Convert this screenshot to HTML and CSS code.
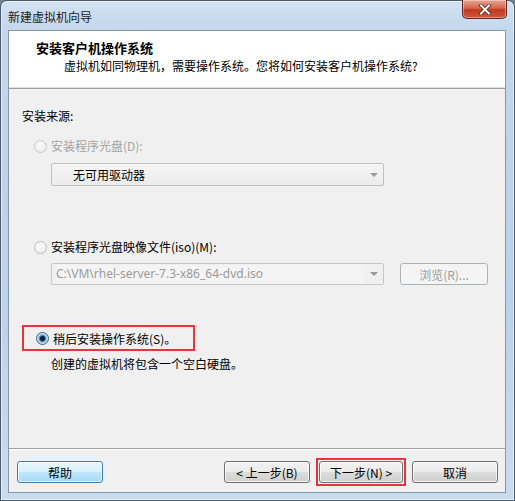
FILE: index.html
```html
<!DOCTYPE html>
<html lang="zh-CN">
<head>
  <meta charset="UTF-8" />
  <title>新建虚拟机向导</title>
  <link rel="stylesheet" href="styles.css">
</head>
<body>

  <div class="window">
    <div class="titlebar">
      <span class="title">新建虚拟机向导</span>
      <button class="close-btn">
        <svg width="14" height="11" viewBox="0 0 14 11">
          <path d="M3 1.5 L11 9.5 M11 1.5 L3 9.5" stroke="#3a1a14" stroke-width="3.4" stroke-linecap="square"/>
          <path d="M3 1.5 L11 9.5 M11 1.5 L3 9.5" stroke="#ffffff" stroke-width="2" stroke-linecap="square"/>
        </svg>
      </button>
    </div>

    <div class="client">
      <div class="header">
        <div class="header-title">安装客户机操作系统</div>
        <div class="header-sub">虚拟机如同物理机，需要操作系统。您将如何安装客户机操作系统?</div>
      </div>

      <div class="content">
        <div class="label">安装来源:</div>

        <div class="radio-row disabled row-cd">
          <span class="radio"></span>
          <span>安装程序光盘(D):</span>
        </div>
        <div class="combo combo-list">
          <span class="combo-text">无可用驱动器</span>
          <span class="arrow"></span>
        </div>

        <div class="radio-row row-iso">
          <span class="radio radio-off"></span>
          <span>安装程序光盘映像文件(iso)(M):</span>
        </div>
        <div class="iso-line">
          <div class="combo combo-edit">
            <span class="combo-text">C:\VM\rhel-server-7.3-x86_64-dvd.iso</span>
            <span class="arrow"></span>
          </div>
          <button class="btn btn-disabled">浏览(R)...</button>
        </div>

        <div class="mark later">
          <span class="radio radio-on"></span>
          <span>稍后安装操作系统(S)。</span>
        </div>
        <div class="note">创建的虚拟机将包含一个空白硬盘。</div>
      </div>

      <div class="footer">
        <button class="btn btn-focus">帮助</button>
        <div class="nav">
          <button class="btn">&lt; 上一步(B)</button>
          <div class="mark mark-btn">
            <button class="btn">下一步(N) &gt;</button>
          </div>
          <button class="btn">取消</button>
        </div>
      </div>
    </div>
  </div>

</body>
</html>
```

FILE: styles.css
```css
html, body {
  margin: 0;
  padding: 0;
  height: 100%;
  overflow: hidden;
}

body {
  font-family: "Noto Sans CJK SC", "Noto Sans", sans-serif;
  font-size: 12px;
  color: #000;
  background: #6f8499;
}

.window {
  width: 515px;
  height: 501px;
  box-sizing: border-box;
  border: 1px solid #4a5a6c;
  border-radius: 7px 7px 0 0;
  background: linear-gradient(to bottom, #d3e2f2 0%, #c2d6ec 30px, #bcd2ea 60%, #c9dbef 100%);
  display: flex;
  flex-direction: column;
  box-shadow: inset 0 0 0 1px rgba(255,255,255,0.6);
}

.titlebar {
  height: 29px;
  display: flex;
  align-items: flex-start;
  justify-content: space-between;
  padding-left: 7px;
}

.title {
  line-height: 16px;
  margin-top: 8px;
  color: #1b1b1b;
}

.close-btn {
  width: 45px;
  height: 19px;
  margin-right: 7px;
  margin-top: -1px;
  border: 1px solid #5c2a22;
  border-top: none;
  border-radius: 0 0 5px 5px;
  background: linear-gradient(to bottom, #e8a493 0%, #d2664c 45%, #c0391d 55%, #d0583d 100%);
  box-shadow: inset 0 0 0 1px rgba(255,255,255,0.35);
  display: flex;
  align-items: center;
  justify-content: center;
  padding: 0;
}

.client {
  flex: 1;
  margin: 0 8px 7px 7px;
  border: 1px solid #8798aa;
  background: #f0f0f0;
  display: flex;
  flex-direction: column;
}

.header {
  height: 57px;
  background: #fff;
  border-bottom: 1px solid #d5dfe5;
  box-sizing: border-box;
  padding: 8px 0 0 27px;
}

.header-title {
  font-size: 13px;
  font-weight: bold;
  line-height: 17px;
}

.header-sub {
  line-height: 17px;
  margin-top: 1px;
  padding-left: 28px;
}

.content {
  flex: 1;
  padding: 19px 0 0 13px;
  border-top: 1px solid #a0a0a0;
}

.label {
  line-height: 16px;
}

.radio-row {
  display: flex;
  align-items: center;
  gap: 4px;
  line-height: 16px;
  margin-left: 12px;
}

.row-cd {
  margin-top: 14px;
}

.row-iso {
  margin-top: 53px;
}

.disabled {
  color: #a3a3a3;
}

.radio {
  width: 11px;
  height: 11px;
  border-radius: 50%;
  border: 1px solid #c9c9c9;
  background: radial-gradient(circle at 40% 35%, #fbfbfb, #e9e9e9);
  flex: none;
}

.radio-off {
  border-color: #bdbdbd;
}

.radio-on {
  border-color: #3c5d80;
  background: radial-gradient(circle, #0e2030 0 2px, #3a86c4 3px, #9dc8e8 4px, #f4f8fb 6px);
}

.combo {
  display: flex;
  align-items: center;
  justify-content: space-between;
  box-sizing: border-box;
  width: 333px;
  margin-left: 29px;
  border: 1px solid #c0c0c0;
  border-radius: 2px;
}

.combo-list {
  height: 23px;
  margin-top: 9px;
  background: linear-gradient(to bottom, #f5f5f5, #ececec);
  padding-left: 21px;
}

.combo-edit {
  height: 22px;
  background: #f0f0f0;
  padding-left: 4px;
  border-color: #c6c6c6;
}

.combo-edit .combo-text {
  font-family: "Noto Sans", sans-serif;
  color: #9a9a9a;
  background: #f4f4f4;
  flex: 1;
  line-height: 18px;
}

.arrow {
  width: 19px;
  display: flex;
  justify-content: center;
}

.arrow::after {
  content: "";
  border-left: 4px solid transparent;
  border-right: 4px solid transparent;
  border-top: 4px solid #9a9a9a;
}

.iso-line {
  display: flex;
  align-items: center;
  gap: 16px;
  margin-top: 8px;
}

.iso-line .btn {
  width: 88px;
  height: 22px;
}

.btn {
  width: 86px;
  height: 22px;
  box-sizing: border-box;
  padding: 0;
  font-family: "Noto Sans CJK SC", "Noto Sans", sans-serif;
  font-size: 12px;
  color: #000;
  border: 1px solid #707070;
  border-radius: 3px;
  background: linear-gradient(to bottom, #f2f2f2 0%, #ebebeb 50%, #dddddd 51%, #cfcfcf 100%);
  box-shadow: inset 0 0 0 1px rgba(255,255,255,0.7);
}

.btn-disabled {
  color: #9c9c9c;
  border-color: #adb2b5;
  background: #f4f4f4;
  box-shadow: none;
}

.btn-focus {
  border-color: #3c7fb1;
  background: linear-gradient(to bottom, #eaf6fd 0%, #d9f0fc 50%, #bee6fd 51%, #a7d9f5 100%);
}

.mark {
  border: 2px solid #e8343b;
}

.later {
  display: flex;
  align-items: center;
  gap: 4px;
  width: 173px;
  height: 26px;
  box-sizing: border-box;
  padding-left: 12px;
  margin-top: 40px;
}

.note {
  line-height: 16px;
  margin: 5px 0 0 29px;
}

.footer {
  display: flex;
  justify-content: space-between;
  align-items: center;
  border-top: 1px solid #a0a0a0;
  box-shadow: inset 0 1px 0 #fff;
  padding: 9px 7px 6px 8px;
}

.nav {
  display: flex;
  align-items: center;
  gap: 6px;
}

.mark-btn {
  padding: 1px;
  display: flex;
}

.mark-btn .btn {
  width: 84px;
}
```
